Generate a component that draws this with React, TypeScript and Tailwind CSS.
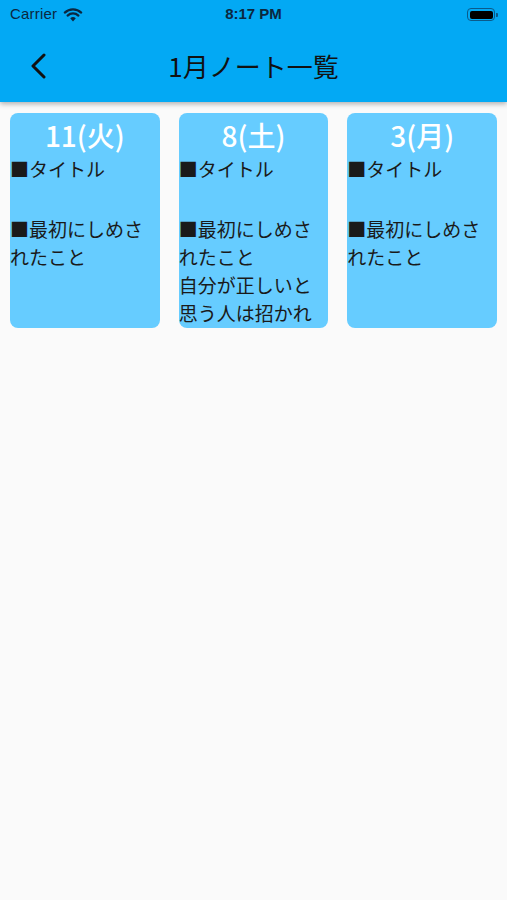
import React from "react";

const cjk = { fontFamily: '"Noto Sans CJK JP", "Noto Sans", sans-serif' };

const cards = [
  { date: "11(火)", lines: ["■タイトル", "", "■最初にしめされたこと"] },
  {
    date: "8(土)",
    lines: ["■タイトル", "", "■最初にしめされたこと", "自分が正しいと思う人は招かれ"],
  },
  { date: "3(月)", lines: ["■タイトル", "", "■最初にしめされたこと"] },
];

export default function App() {
  return (
    <div className="w-[507px] h-[900px] bg-[#fafafa] overflow-hidden" style={cjk}>
      <div className="bg-[#03a9f4] h-[102px] shadow-[0_2px_5px_rgba(0,0,0,0.3)] relative z-10 flex flex-col">
        <div className="h-[29px] flex items-center justify-between pl-[10px] pr-[9px] relative">
          <div className="flex items-center gap-[6px]">
            <span className="text-[15px] text-[#0b2740] tracking-[0.2px]" style={{ fontFamily: '"Liberation Sans", sans-serif' }}>
              Carrier
            </span>
            <svg width="20" height="14" viewBox="0 0 20 14">
              <path d="M10 13.5 L7.2 10.3 A4.2 4.2 0 0 1 12.8 10.3 Z" fill="#0b2740" />
              <path d="M4.6 7.6 A7.8 7.8 0 0 1 15.4 7.6" stroke="#0b2740" strokeWidth="2.2" fill="none" strokeLinecap="round" />
              <path d="M1.8 4.6 A11.8 11.8 0 0 1 18.2 4.6" stroke="#0b2740" strokeWidth="2.2" fill="none" strokeLinecap="round" />
            </svg>
          </div>
          <span
            className="absolute left-0 right-0 text-center text-[15px] font-bold text-[#0b2740]"
            style={{ fontFamily: '"Liberation Sans", sans-serif' }}
          >
            8:17 PM
          </span>
          <div className="flex items-center">
            <div className="w-[28px] h-[13px] rounded-[4px] border border-[#0b5a8a] p-[1.5px]">
              <div className="w-full h-full rounded-[2px] bg-black" />
            </div>
            <div className="w-[2px] h-[4px] bg-[#0b5a8a] rounded-r-[1px] ml-[1px]" />
          </div>
        </div>
        <div className="flex-1 flex items-center relative">
          <svg className="absolute left-[29px] top-[24px]" width="18" height="26" viewBox="0 0 18 26">
            <path d="M15 2 L4 13 L15 24" stroke="#111" strokeWidth="3" fill="none" strokeLinecap="round" strokeLinejoin="round" />
          </svg>
          <div className="w-full text-center text-[26px] text-[#111] leading-none mt-[1px]">1月ノート一覧</div>
        </div>
      </div>
      <div className="flex gap-[19px] pl-[10px] pr-[10px] pt-[11px]">
        {cards.map((c, i) => (
          <div key={i} className="w-[150px] h-[215px] bg-[#66ccff] rounded-[8px] overflow-hidden flex flex-col">
            <div className="text-center text-white text-[28px] font-medium leading-[40px] mt-[2px]">{c.date}</div>
            <div className="text-[19px] leading-[28px] text-[#1a1a1a] break-all">
              {c.lines.map((l, j) =>
                l === "" ? (
                  <div key={j} className="h-[32px]" />
                ) : (
                  <div key={j}>{l}</div>
                )
              )}
            </div>
          </div>
        ))}
      </div>
    </div>
  );
}
